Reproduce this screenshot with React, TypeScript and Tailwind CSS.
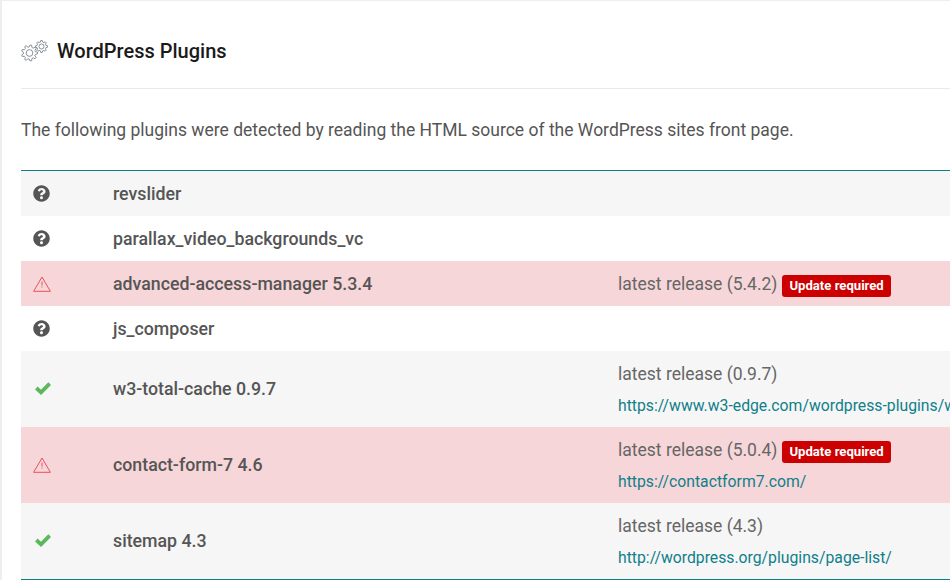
import React from 'react';
import { FaQuestionCircle } from 'react-icons/fa';

type Status = 'unknown' | 'warn' | 'ok';

type Plugin = {
  name: string;
  status: Status;
  latest?: string;
  outdated?: boolean;
  url?: string;
  bg: string;
};

const plugins: Plugin[] = [
  { name: 'revslider', status: 'unknown', bg: 'bg-[#f6f6f6]' },
  { name: 'parallax_video_backgrounds_vc', status: 'unknown', bg: 'bg-white' },
  {
    name: 'advanced-access-manager 5.3.4',
    status: 'warn',
    latest: '5.4.2',
    outdated: true,
    bg: 'bg-[#f7d6d9]',
  },
  { name: 'js_composer', status: 'unknown', bg: 'bg-white' },
  {
    name: 'w3-total-cache 0.9.7',
    status: 'ok',
    latest: '0.9.7',
    url: 'https://www.w3-edge.com/wordpress-plugins/w3-total-cache/',
    bg: 'bg-[#f6f6f6]',
  },
  {
    name: 'contact-form-7 4.6',
    status: 'warn',
    latest: '5.0.4',
    outdated: true,
    url: 'https://contactform7.com/',
    bg: 'bg-[#f7d6d9]',
  },
  {
    name: 'sitemap 4.3',
    status: 'ok',
    latest: '4.3',
    url: 'http://wordpress.org/plugins/page-list/',
    bg: 'bg-[#f6f6f6]',
  },
];

// outline of a toothed gear, built from polar points
const gearPath = (cx: number, cy: number, outer: number, inner: number, teeth: number) => {
  const pts: string[] = [];
  const step = (Math.PI * 2) / teeth;
  for (let i = 0; i < teeth; i++) {
    const a = i * step;
    const add = (r: number, t: number) =>
      pts.push(`${(cx + r * Math.cos(t)).toFixed(2)} ${(cy + r * Math.sin(t)).toFixed(2)}`);
    add(inner, a - step * 0.32);
    add(outer, a - step * 0.16);
    add(outer, a + step * 0.16);
    add(inner, a + step * 0.32);
  }
  return `M${pts.join('L')}Z`;
};

const Gear = ({ cx, cy, r, teeth }: { cx: number; cy: number; r: number; teeth: number }) => (
  <g fill="none" stroke="#6f7683" strokeWidth="0.8">
    <path d={gearPath(cx, cy, r, r * 0.76, teeth)} />
    <circle cx={cx} cy={cy} r={r * 0.42} />
  </g>
);

const StatusIcon = ({ status }: { status: Status }) => {
  if (status === 'unknown') {
    return <FaQuestionCircle className="block w-[17px] h-[17px] text-[#555555] -mt-[1px]" />;
  }
  if (status === 'warn') {
    return (
      <svg width="18" height="16" viewBox="0 0 18 16" className="block">
        <path d="M9 1 0.6 15.3h16.8z" fill="none" stroke="#e8505b" strokeWidth="1" />
        <path d="M9 5.5v6" stroke="#e8505b" strokeWidth="1" strokeDasharray="4 1 1" />
      </svg>
    );
  }
  return (
    <svg width="16" height="13" viewBox="0 0 16 13" className="block ml-[2px] -mt-[1px]">
      <path d="M1.3 6 6 10.3 14.7 1.6" fill="none" stroke="#5cb85c" strokeWidth="3.8" />
    </svg>
  );
};

export default function App() {
  return (
    <div className="w-[950px] h-[580px] overflow-hidden bg-white border-l-2 border-t border-[#eeeeee] font-['Roboto',sans-serif]">
      <div className="pl-[19px]">
        <div className="h-[88px] flex items-center gap-[9px] border-b border-[#e9e9e9] pt-[13px]">
          <svg width="27" height="22" viewBox="0 0 27 22" className="block shrink-0">
            <Gear cx={8.5} cy={13} r={8} teeth={9} />
            <Gear cx={20.5} cy={6.5} r={6} teeth={8} />
          </svg>
          <h2 className="text-[20px] font-medium text-[#1a1a1a] leading-none">WordPress Plugins</h2>
        </div>
        <p className="h-[81px] pt-[29px] text-[17.5px] leading-[24px] text-[#555555] whitespace-nowrap">
          The following plugins were detected by reading the HTML source of the WordPress sites front page.
        </p>
        <div className="w-[1100px] border-t border-b border-[#0f7f7f]">
          {plugins.map((p) => (
            <div key={p.name} className={`${p.bg} flex items-center ${p.url ? 'h-[76px]' : 'h-[45px]'}`}>
              <div className="w-[92px] shrink-0 pl-3">
                <StatusIcon status={p.status} />
              </div>
              <div className={`w-[505px] shrink-0 text-[17.75px] font-medium text-[#555555] ${p.url ? '' : 'mt-[2px]'}`}>
                {p.name}
              </div>
              <div className="flex-1 text-[17.5px] text-[#666666] whitespace-nowrap">
                {p.latest && (
                  <div className="flex items-center h-[33px] pt-[2px]">
                    latest release ({p.latest})
                    {p.outdated && (
                      <span className="ml-[5px] mt-[3px] rounded-[3px] bg-[#cc0000] px-[7px] h-[22px] flex items-center text-[13.125px] font-bold text-white">
                        Update required
                      </span>
                    )}
                  </div>
                )}
                {p.url && (
                  <a href={p.url} className="block h-[31px] leading-[31px] text-[15.75px] text-[#0f7f8a]">
                    {p.url}
                  </a>
                )}
              </div>
            </div>
          ))}
        </div>
      </div>
    </div>
  );
}
